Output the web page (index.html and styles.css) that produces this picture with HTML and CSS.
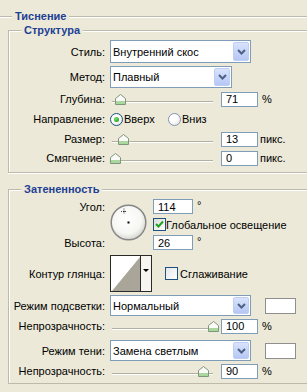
FILE: index.html
```html
<!DOCTYPE html>
<html>
<head>
<meta charset="UTF-8">
<title>Тиснение</title>
<link rel="stylesheet" href="styles.css">
</head>
<body>
<fieldset class="group outer">
  <legend>Тиснение</legend>

  <fieldset class="group struct">
    <legend>Структура</legend>
    <div class="rows struct-rows">
      <div class="row h23">
        <span class="lbl">Стиль:</span>
        <div class="combo wide">
          <span class="combo-text">Внутренний скос</span>
          <span class="combo-btn"><svg width="9" height="6" viewBox="0 0 9 6"><polyline points="1,1 4.5,4.5 8,1"/></svg></span>
        </div>
      </div>
      <div class="row h22">
        <span class="lbl">Метод:</span>
        <div class="combo short">
          <span class="combo-text">Плавный</span>
          <span class="combo-btn"><svg width="9" height="6" viewBox="0 0 9 6"><polyline points="1,1 4.5,4.5 8,1"/></svg></span>
        </div>
      </div>
      <div class="row h16">
        <span class="lbl">Глубина:</span>
        <div class="slider">
          <span class="thumb" style="left:5px"><svg width="11" height="11" viewBox="0 0 11 11"><path d="M0.5 10.5V4.5L5.5 0.5L10.5 4.5V10.5Z"/><rect x="1" y="7" width="9" height="3"/></svg></span>
        </div>
        <input class="field" type="text" value="71" readonly>
        <span class="unit">%</span>
      </div>
      <div class="row h18">
        <span class="lbl">Направление:</span>
        <label class="opt first"><span class="radio on"></span>Вверх</label>
        <label class="opt"><span class="radio"></span>Вниз</label>
      </div>
      <div class="row h16">
        <span class="lbl">Размер:</span>
        <div class="slider">
          <span class="thumb" style="left:8px"><svg width="11" height="11" viewBox="0 0 11 11"><path d="M0.5 10.5V4.5L5.5 0.5L10.5 4.5V10.5Z"/><rect x="1" y="7" width="9" height="3"/></svg></span>
        </div>
        <input class="field" type="text" value="13" readonly>
        <span class="unit px">пикс.</span>
      </div>
      <div class="row h16">
        <span class="lbl">Смягчение:</span>
        <div class="slider">
          <span class="thumb" style="left:0px"><svg width="11" height="11" viewBox="0 0 11 11"><path d="M0.5 10.5V4.5L5.5 0.5L10.5 4.5V10.5Z"/><rect x="1" y="7" width="9" height="3"/></svg></span>
        </div>
        <input class="field" type="text" value="0" readonly>
        <span class="unit px">пикс.</span>
      </div>
    </div>
  </fieldset>

  <fieldset class="group shade">
    <legend>Затененность</legend>
    <div class="rows shade-rows">
      <div class="angle">
        <span class="lbl lbl-angle">Угол:</span>
        <div class="dial">
          <svg width="37" height="37" viewBox="0 0 37 37">
            <defs>
              <radialGradient id="dialfill" cx="45%" cy="40%" r="60%">
                <stop offset="0" stop-color="#ffffff"/>
                <stop offset="0.7" stop-color="#f6f6f3"/>
                <stop offset="1" stop-color="#d6d6d1"/>
              </radialGradient>
            </defs>
            <circle cx="18.5" cy="18.5" r="17.3" fill="url(#dialfill)" stroke="#868686" stroke-width="1.5"/>
            <rect x="17.5" y="17.5" width="2" height="2" fill="#000"/>
            <path d="M11 7.5h6M14 4.5v6" stroke="#444" stroke-dasharray="1 1"/>
            <rect x="13.5" y="7" width="1" height="1" fill="#000"/>
          </svg>
        </div>
        <div class="cell cell-angle">
          <input class="field deg" type="text" value="114" readonly>
          <span class="deg-mark">°</span>
        </div>
        <label class="cell cell-global">
          <span class="check"><svg width="11" height="11" viewBox="0 0 11 11"><polyline points="2,5 4.5,7.5 9,2.5"/></svg></span>Глобальное освещение
        </label>
        <span class="lbl lbl-alt">Высота:</span>
        <div class="cell cell-alt">
          <input class="field deg" type="text" value="26" readonly>
          <span class="deg-mark">°</span>
        </div>
      </div>

      <div class="row h37 contour-row">
        <span class="lbl">Контур глянца:</span>
        <div class="contour">
          <svg class="contour-pic" width="29" height="35" viewBox="0 0 29 35"><polygon points="1,35 29,1 29,35"/></svg>
          <span class="contour-btn"><span class="tri"></span></span>
        </div>
        <label class="opt smooth"><span class="check off"></span>Сглаживание</label>
      </div>

      <div class="mode">
        <div class="row h21">
          <span class="lbl">Режим подсветки:</span>
          <div class="combo wide">
            <span class="combo-text">Нормальный</span>
            <span class="combo-btn"><svg width="9" height="6" viewBox="0 0 9 6"><polyline points="1,1 4.5,4.5 8,1"/></svg></span>
          </div>
          <span class="swatch"></span>
        </div>
        <div class="row h16">
          <span class="lbl">Непрозрачность:</span>
          <div class="slider">
            <span class="thumb" style="left:98px"><svg width="11" height="11" viewBox="0 0 11 11"><path d="M0.5 10.5V4.5L5.5 0.5L10.5 4.5V10.5Z"/><rect x="1" y="7" width="9" height="3"/></svg></span>
          </div>
          <input class="field" type="text" value="100" readonly>
          <span class="unit">%</span>
        </div>
      </div>

      <div class="mode">
        <div class="row h21">
          <span class="lbl">Режим тени:</span>
          <div class="combo wide">
            <span class="combo-text">Замена светлым</span>
            <span class="combo-btn"><svg width="9" height="6" viewBox="0 0 9 6"><polyline points="1,1 4.5,4.5 8,1"/></svg></span>
          </div>
          <span class="swatch"></span>
        </div>
        <div class="row h16">
          <span class="lbl">Непрозрачность:</span>
          <div class="slider">
            <span class="thumb" style="left:88px"><svg width="11" height="11" viewBox="0 0 11 11"><path d="M0.5 10.5V4.5L5.5 0.5L10.5 4.5V10.5Z"/><rect x="1" y="7" width="9" height="3"/></svg></span>
          </div>
          <input class="field" type="text" value="90" readonly>
          <span class="unit">%</span>
        </div>
      </div>
    </div>
  </fieldset>
</fieldset>
</body>
</html>
```

FILE: styles.css
```css
html, body { margin:0; padding:0; overflow:hidden; }

body {
    background:#ECE9D8;
    font:11px "Liberation Sans", Arial, sans-serif;
    color:#000;
}

/* etched group boxes, cut off at the right like the dialog crop */
.group {
    margin:0;
    padding:0;
    min-inline-size:0;
    border:1px solid #BDBAAC;
    border-right:0;
    box-shadow:inset 1px 1px 0 #fff, 0 1px 0 #fff;
}

.group legend {
    margin-left:12px;
    padding:0 3px;
    line-height:13px;
    font-weight:bold;
    color:#213F94;
    background:#ECE9D8;
}

.outer {
    margin:10px 0 0 0;
    padding:0 0 0 8px;
    border-width:1px 0 0 0;
    box-shadow:inset 0 1px 0 #fff;
}
.outer > legend { margin-left:4px; }

.struct { margin:1px 0 0 0; padding:3px 0 6px 0; }
.shade { margin:10px 0 0 0; padding:3px 0 4px 0; }

/* rows */
.rows { display:flex; flex-direction:column; }
.struct-rows { gap:3px; }

.row { display:flex; align-items:center; }
.h16{height:16px;} .h18{height:18px;} .h21{height:21px;}
.h22{height:22px;} .h23{height:23px;} .h37{height:37px;}

.lbl {
    flex:none;
    width:96px;
    margin-right:5px;
    text-align:right;
    white-space:nowrap;
}

/* combo boxes */
.combo {
    display:flex;
    box-sizing:border-box;
    height:100%;
    padding:1px;
    border:1px solid #7F9DB9;
    background:#fff;
}
.combo.wide{width:141px;}
.combo.short{width:122px;}

.combo-text {
    flex:1;
    display:flex;
    align-items:center;
    padding-left:1px;
    white-space:nowrap;
}

.combo-btn {
    display:flex;
    align-items:center;
    justify-content:center;
    width:16px;
    box-sizing:border-box;
    border:1px solid #BCCDF6;
    border-radius:2px;
    background:linear-gradient(#D9E3FC, #B5C7F4);
}
.combo-btn polyline{fill:none; stroke:#4D6185; stroke-width:2;}

/* sliders */
.slider {
    position:relative;
    flex:none;
    width:106px;
    height:16px;
}
.slider::before {
    content:"";
    position:absolute;
    left:2px; right:3px; top:10px;
    border-top:1px solid #B3B0A2;
    border-bottom:1px solid #fff;
}
.thumb { position:absolute; top:3px; width:11px; height:11px; }
.thumb svg { display:block; }
.thumb path { fill:#FAFBF8; stroke:#7F957C; }
.thumb rect { fill:#A9D79E; }

/* text fields */
.field {
    box-sizing:border-box;
    width:37px;
    height:15px;
    margin:0 0 0 5px;
    padding:0 0 0 4px;
    border:1px solid #7F9DB9;
    background:#fff;
    font:inherit;
    color:#000;
    outline:none;
}
.field.deg { width:40px; margin:0; }

.unit { margin-left:4px; }
.unit.px { margin-left:2px; }

/* radio buttons and check boxes */
.opt { display:flex; align-items:center; }
.opt.first { width:58px; }

.radio {
    position:relative;
    width:13px; height:13px;
    box-sizing:border-box;
    margin-right:1px;
    border:1px solid #8596B3;
    border-radius:50%;
    background:radial-gradient(circle at 35% 35%, #fff 35%, #DCDCD6 100%);
}
.radio.on { border-color:#1C5180; }
.radio.on::after {
    content:"";
    position:absolute;
    left:3px; top:3px;
    width:5px; height:5px;
    border-radius:50%;
    background:radial-gradient(circle at 40% 35%, #7EE070, #21A121 75%);
}

.check {
    display:flex;
    align-items:center;
    justify-content:center;
    width:13px; height:13px;
    box-sizing:border-box;
    border:1px solid #1C5180;
    background:linear-gradient(135deg, #DCDCD6, #fff);
}
.check polyline { fill:none; stroke:#21A121; stroke-width:2; }
.check.off { margin-right:2px; background:linear-gradient(135deg, #E4E6E8, #fff); }

/* angle block */
.angle {
    display:grid;
    grid-template-columns:96px 38px auto;
    grid-template-rows:15px 13px 15px;
    column-gap:5px;
    row-gap:4px;
}
.angle .lbl { width:auto; margin:0; align-self:center; }
.lbl-angle { grid-area:1 / 1; }
.lbl-alt { grid-area:3 / 1; }
.dial { grid-area:1 / 2 / 4 / 3; align-self:start; margin-top:5px; }
.dial svg { display:block; }
.cell { display:flex; align-items:center; }
.cell-angle { grid-area:1 / 3; }
.cell-global { grid-area:2 / 3; }
.cell-alt { grid-area:3 / 3; }
.deg-mark { align-self:flex-start; margin-left:4px; line-height:12px; }

/* gloss contour */
.contour-row { margin-top:5px; }
.contour {
    display:flex;
    box-sizing:border-box;
    width:42px;
    height:37px;
    border:1px solid #2A2A2A;
    background:#fff;
}
.contour-pic { display:block; }
.contour-pic polygon { fill:#A9A699; }
.contour-btn {
    display:flex;
    justify-content:center;
    flex:1;
    padding-top:13px;
    border-left:1px solid #2A2A2A;
    background:#F6F5F0;
}
.tri {
    width:0; height:0;
    border-top:3px solid #000;
    border-left:3px solid transparent;
    border-right:3px solid transparent;
}
.smooth { margin-left:13px; }

/* highlight / shadow modes */
.mode { display:flex; flex-direction:column; gap:2px; margin-top:3px; }
.mode + .mode { margin-top:6px; }

.swatch {
    box-sizing:border-box;
    width:31px;
    height:16px;
    margin-left:14px;
    border:1px solid #8F8F8F;
    background:#fff;
}
```
